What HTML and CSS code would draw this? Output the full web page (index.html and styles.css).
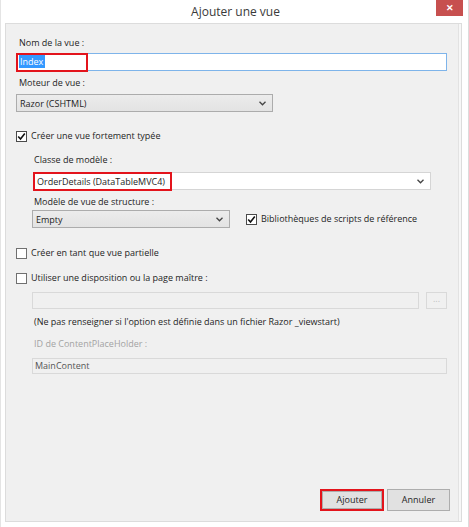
FILE: index.html
```html
<!DOCTYPE html>
<html lang="fr">
<head>
<meta charset="utf-8">
<title>Ajouter une vue</title>
<link rel="stylesheet" href="styles.css">
</head>
<body>
<div class="window">
  <div class="titlebar">
    <div></div>
    <div class="title">Ajouter une vue</div>
    <div class="close">&#x2715;</div>
  </div>
  <div class="panel">
    <div class="label indent l-nom">Nom de la vue :</div>
    <div class="input text-input">
      <span class="sel">Index</span>
      <span class="mark mark-index"></span>
    </div>
    <div class="label indent l-moteur">Moteur de vue :</div>
    <div class="combo combo-razor"><span class="val">Razor (CSHTML)</span><svg class="arrow" width="7" height="5" viewBox="0 0 7 5"><polyline points="0.5,0.8 3.5,3.8 6.5,0.8" fill="none" stroke="#444" stroke-width="1.3"/></svg></div>

    <div class="check-row r-typed"><span class="box checked"><svg width="9" height="9" viewBox="0 0 9 9"><polyline points="1.2,4.5 3.5,7 7.8,1.5" fill="none" stroke="#111" stroke-width="1.6"/></svg></span><span>Créer une vue fortement typée</span></div>

    <div class="group g-typed">
      <div class="label l-classe">Classe de modèle :</div>
      <div class="combo combo-white combo-classe"><span class="val">OrderDetails (DataTableMVC4)</span><svg class="arrow" width="7" height="5" viewBox="0 0 7 5"><polyline points="0.5,0.8 3.5,3.8 6.5,0.8" fill="none" stroke="#444" stroke-width="1.3"/></svg><span class="mark mark-classe"></span></div>
      <div class="label l-modele">Modèle de vue de structure :</div>
      <div class="row r-empty">
        <div class="combo combo-empty"><span class="val">Empty</span><svg class="arrow" width="7" height="5" viewBox="0 0 7 5"><polyline points="0.5,0.8 3.5,3.8 6.5,0.8" fill="none" stroke="#444" stroke-width="1.3"/></svg></div>
        <div class="check-row r-biblio"><span class="box checked"><svg width="9" height="9" viewBox="0 0 9 9"><polyline points="1.2,4.5 3.5,7 7.8,1.5" fill="none" stroke="#111" stroke-width="1.6"/></svg></span><span>Bibliothèques de scripts de référence</span></div>
      </div>
    </div>

    <div class="check-row r-partial"><span class="box"></span><span>Créer en tant que vue partielle</span></div>
    <div class="check-row r-layout"><span class="box"></span><span>Utiliser une disposition ou la page maître :</span></div>

    <div class="group g-layout">
      <div class="row r-disabled">
        <div class="input disabled d-path"></div>
        <div class="btn-small">...</div>
      </div>
      <div class="note">(Ne pas renseigner si l'option est définie dans un fichier Razor _viewstart)</div>
      <div class="label label-disabled l-id">ID de ContentPlaceHolder :</div>
      <div class="input disabled d-main">MainContent</div>
    </div>

    <div class="buttons">
      <div class="btn btn-ok">Ajouter</div>
      <div class="btn btn-cancel">Annuler</div>
    </div>
  </div>
</div>
</body>
</html>
```

FILE: styles.css
```css
html, body {
  margin: 0;
  padding: 0;
  background: #ffffff;
}
body {
  font-family: "Open Sans", "Noto Sans", sans-serif;
  font-size: 9px;
  color: #1e1e1e;
}
.window {
  width: 469px;
  height: 527px;
  box-sizing: border-box;
  background: #ffffff;
  display: flex;
  flex-direction: column;
  border-left: 1px solid #e4e4e4;
  border-right: 1px solid #dcdcdc;
}
.titlebar {
  height: 23px;
  display: grid;
  grid-template-columns: 1fr auto 1fr;
  align-items: start;
  flex: none;
}
.title {
  font-size: 12px;
  color: #3a3a3a;
  line-height: 24px;
  padding-left: 2px;
}
.close {
  justify-self: end;
  margin-right: 5px;
  width: 27px;
  height: 16px;
  background: #c7504f;
  color: #ffffff;
  font-size: 9px;
  line-height: 16px;
  text-align: center;
  font-weight: bold;
}
.panel {
  margin: 0 6px 5px 4px;
  flex: 1;
  background: #f0f0f0;
  border: 1px solid #dcdcdc;
  box-shadow: inset -2px 0 0 #f7f7f7, inset -3px 0 0 #e2e2e2;
  padding: 12px 14px 10px 10px;
  display: flex;
  flex-direction: column;
}
.label {
  line-height: 14px;
  height: 14px;
  white-space: nowrap;
}
.indent { margin-left: 3px; }
.label-disabled {
  color: #a3a3a3;
}
.input {
  position: relative;
  box-sizing: border-box;
  height: 18px;
  background: #ffffff;
  border: 1px solid #7eb4ea;
  line-height: 16px;
  padding-left: 2px;
}
.text-input {
  margin-top: 3px;
}
.sel {
  display: inline-block;
  background: #3399ff;
  color: #ffffff;
  line-height: 13px;
  padding: 0 2px 0 1px;
  margin-top: 1px;
  vertical-align: top;
}
.mark {
  position: absolute;
  border: 2px solid #e3141c;
  box-sizing: border-box;
  pointer-events: none;
}
.mark-index {
  left: -1px;
  top: -1px;
  width: 72px;
  height: 19px;
}
.l-moteur { margin-top: 5px; }
.combo {
  position: relative;
  box-sizing: border-box;
  height: 18px;
  border: 1px solid #acacac;
  background: linear-gradient(#ececec, #e3e3e3);
  display: flex;
  align-items: center;
  padding: 0 6px 0 3px;
}
.combo .val { flex: 1; white-space: nowrap; }
.combo .arrow { flex: none; }
.combo-razor {
  margin-top: 4px;
  width: 257px;
}
.combo-white {
  background: #ffffff;
  border-color: #d5d5d5;
}
.check-row {
  display: flex;
  align-items: center;
  gap: 4px;
  line-height: 14px;
  white-space: nowrap;
}
.box {
  box-sizing: border-box;
  width: 11px;
  height: 11px;
  border: 1px solid #707070;
  background: #ffffff;
  display: flex;
  align-items: center;
  justify-content: center;
  flex: none;
}
.box.checked { border-color: #4a4a4a; }
.r-typed { margin-top: 17px; }
.group {
  padding-left: 17px;
  display: flex;
  flex-direction: column;
}
.l-classe { margin-top: 10px; margin-left: 1px; }
.combo-classe {
  margin-top: 5px;
  width: 398px;
}
.mark-classe {
  left: -1px;
  top: -1px;
  width: 139px;
  height: 19px;
}
.l-modele { margin-top: 5px; margin-left: 1px; }
.row {
  display: flex;
  align-items: center;
}
.r-empty { margin-top: 1px; margin-left: -1px; }
.combo-empty { width: 198px; }
.r-biblio { margin-left: 16px; }
.r-partial { margin-top: 18px; }
.r-layout { margin-top: 11px; }
.g-layout { padding-left: 16px; }
.r-disabled { margin-top: 7px; gap: 7px; }
.disabled {
  background: #f0f0f0;
  border-color: #d9d9d9;
  color: #555555;
  height: 17px;
}
.d-path { width: 387px; }
.btn-small {
  box-sizing: border-box;
  width: 21px;
  height: 17px;
  border: 1px solid #d9d9d9;
  background: #f0f0f0;
  color: #c0c0c0;
  text-align: center;
  line-height: 12px;
}
.note {
  margin-top: 6px;
  margin-left: 2px;
  line-height: 14px;
  white-space: nowrap;
}
.l-id { margin-top: 8px; margin-left: 2px; }
.d-main {
  margin-top: 7px;
  width: 415px;
  height: 16px;
  line-height: 14px;
}
.buttons {
  margin-top: auto;
  display: flex;
  justify-content: flex-end;
  gap: 3px;
  margin-right: -3px;
}
.btn {
  box-sizing: border-box;
  height: 22px;
  width: 63px;
  border: 1px solid #adadad;
  background: #e1e1e1;
  text-align: center;
  line-height: 20px;
}
.btn-ok {
  width: 64px;
  border: 2px solid #e3141c;
  line-height: 18px;
  box-shadow: inset 0 0 0 1px #adadad;
}
```
